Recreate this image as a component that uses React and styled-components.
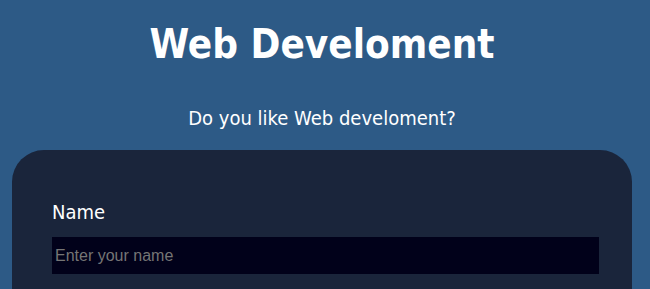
import React from "react";
import styled, { createGlobalStyle } from "styled-components";

const Global = createGlobalStyle`
  html, body { margin: 0; padding: 0; background: #2d5a86; }
  body { font-family: "DejaVu Sans Condensed", "DejaVu Sans", sans-serif; color: #fff; }
`;

const Page = styled.div`
  padding: 0 18px 0 12px;
  display: flex;
  flex-direction: column;
  align-items: stretch;
`;

const Title = styled.h1`
  margin: 20px 0 0;
  font-size: 40px;
  font-weight: 700;
  text-align: center;
  line-height: 48px;
`;

const Subtitle = styled.p`
  margin: 38px 0 0;
  font-size: 20px;
  text-align: center;
  line-height: 24px;
`;

const Card = styled.form`
  margin-top: 20px;
  background: #1a253b;
  border-radius: 32px 32px 0 0;
  padding: 50px 40px 40px;
  display: flex;
  flex-direction: column;
`;

const Label = styled.label`
  font-size: 20px;
  line-height: 24px;
  margin-bottom: 13px;
`;

const Input = styled.input`
  width: 547px;
  height: 37px;
  box-sizing: border-box;
  border: none;
  outline: none;
  background: #01011a;
  color: #fff;
  padding: 0 3px;
  font-family: "Liberation Sans", Arial, sans-serif;
  font-size: 16px;
  margin-bottom: 11px;
  &::placeholder { color: #757575; }
`;

export default function App() {
  return (
    <>
      <Global />
      <Page>
        <Title>Web Develoment</Title>
        <Subtitle>Do you like Web develoment?</Subtitle>
        <Card>
          <Label htmlFor="name">Name</Label>
          <Input id="name" placeholder="Enter your name" />
          <Label htmlFor="email">Email</Label>
          <Input id="email" placeholder="Enter your email" />
        </Card>
      </Page>
    </>
  );
}
